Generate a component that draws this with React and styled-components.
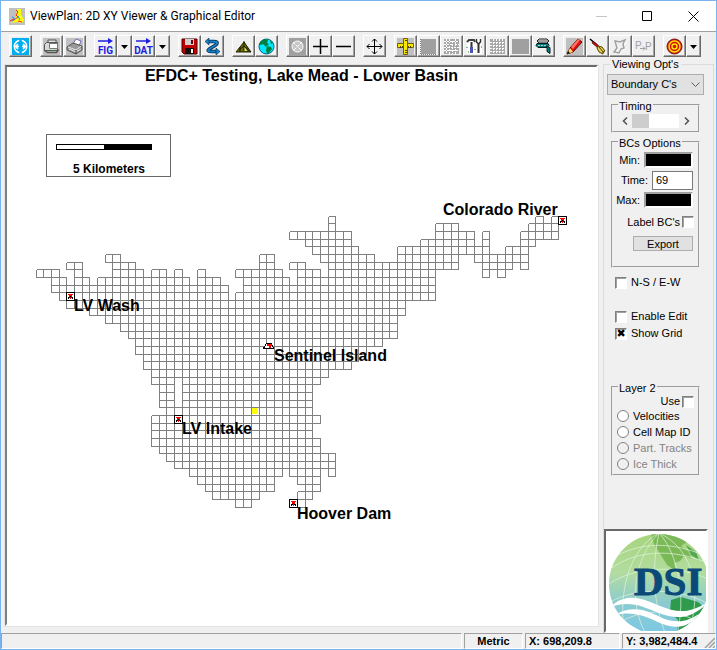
import styled, { createGlobalStyle } from 'styled-components'

const GlobalStyle = createGlobalStyle`
    * {
        box-sizing: border-box;
    }
    body {
        margin: 0;
        background: #f0f0f0;
        color: #000000;
        font-family: "Liberation Sans", Arial, sans-serif;
        font-size: 11px;
        line-height: 13px;
    }
    button, input, select {
        font: inherit;
        color: inherit;
        margin: 0;
        padding: 0;
    }
`

const Window = styled.div`
    display: flex;
    flex-direction: column;
    min-height: 100vh;
    border: 1px solid #7ab4ee;
    background: #f0f0f0;
`

const TitleBar = styled.header`
    display: flex;
    align-items: center;
    height: 31px;
    padding-left: 7px;
    background: #ffffff;
    border-bottom: 1px solid #a0a0a0;

    h1 {
        flex: 1;
        margin: 0 0 0 4px;
        font-family: Roboto, "Noto Sans", sans-serif;
        font-size: 12px;
        font-weight: 400;
        white-space: nowrap;
    }
`

const CaptionButton = styled.button`
    display: flex;
    align-items: center;
    justify-content: center;
    width: 46px;
    height: 28px;
    border: none;
    background: none;
`

const Toolbar = styled.nav`
    display: flex;
    gap: 8px;
    height: 25px;
    padding: 3px 8px 0;
`

const ToolGroup = styled.div`
    display: flex;
`

const ToolButton = styled.button`
    display: flex;
    align-items: center;
    justify-content: center;
    width: ${({ $narrow }) => ($narrow ? '15px' : '23px')};
    height: 22px;
    border: 1px solid;
    border-color: #ffffff #696969 #696969 #ffffff;
    box-shadow: inset -1px -1px 0 #a0a0a0;
    background: #f0f0f0;

    svg {
        display: block;
        flex: none;
    }
`

const Body = styled.main`
    display: flex;
    flex: 1;
    padding: 0 2px 0 4px;
`

const MapPanel = styled.section`
    flex: 1;
    min-width: 0;
    margin: 8px 5px 7px 0;
    border: 2px solid;
    border-color: #696969 #ffffff #ffffff #808080;
    outline: 1px solid #e3e3e3;
    background: #ffffff;

    svg {
        display: block;
    }
    text {
        font-weight: 700;
        font-size: 16px;
    }
    .scaleText {
        font-size: 12px;
    }
`

const Sidebar = styled.fieldset`
    display: flex;
    flex: none;
    flex-direction: column;
    width: 111px;
    min-width: 0;
    margin: 0;
    padding: 0 4px 0 3px;
    border: 1px solid #dcdcdc;
    border-bottom: none;

    > legend {
        margin-left: 3px;
        padding: 0 2px;
        line-height: 15px;
    }
`

const Group = styled.fieldset`
    width: 89px;
    min-width: 0;
    margin: ${({ $top }) => $top}px 0 0 4px;
    padding: 0 4px 2px;
    border: 2px groove #f0f0f0;

    legend {
        margin-left: 1px;
        padding: 3px 1px 0;
        line-height: 13px;
    }
`

const Picker = styled.select`
    width: 97px;
    height: 21px;
    margin-top: 2px;
    padding-left: 3px;
    appearance: none;
    border: 1px solid #adadad;
    border-radius: 0;
    background: #e1e1e1;
`

const PickerBox = styled.label`
    position: relative;
    display: block;
    width: 97px;

    svg {
        position: absolute;
        right: 4px;
        top: 9px;
        pointer-events: none;
    }
`

const ScrollBar = styled.div`
    display: flex;
    align-items: center;
    height: 16px;

    button {
        display: flex;
        flex: none;
        align-items: center;
        justify-content: center;
        width: 15px;
        height: 15px;
        border: none;
        background: none;
    }
    input {
        flex: 1;
        width: 0;
        min-width: 0;
        height: 14px;
        appearance: none;
        background: #ffffff;
    }
    input::-webkit-slider-thumb {
        appearance: none;
        width: 17px;
        height: 14px;
        background: #cdcdcd;
    }
`

const Field = styled.label`
    display: flex;
    align-items: center;
    justify-content: flex-end;
    gap: 4px;
    height: 20px;
    padding-right: 1px;
`

const TextBox = styled.input`
    width: 41px;
    height: 19px;
    padding: 0 3px;
    border: 1px solid #7a7a7a;
    background: #ffffff;
`

const BlackBox = styled.input`
    width: 49px;
    height: 16px;
    border: 2px solid;
    border-color: #a0a0a0 #ffffff #ffffff #a0a0a0;
    background: #000000;
    color: #ffffff;
`

const ExportButton = styled.button`
    display: block;
    width: 60px;
    height: 15px;
    margin: 2px 1px 13px auto;
    border: 1px solid #adadad;
    background: #e1e1e1;
    line-height: 12px;
`

const Option = styled.label`
    display: flex;
    align-items: center;
    justify-content: ${({ $right }) => ($right ? 'flex-end' : 'flex-start')};
    gap: ${({ $right }) => ($right ? '2px' : '4px')};
    height: ${({ $height }) => $height || 17}px;
    color: ${({ $dim }) => ($dim ? '#838383' : '#000000')};
    white-space: nowrap;
`

const CheckBox = styled.input.attrs({ type: 'checkbox' })`
    flex: none;
    display: grid;
    place-content: center;
    width: 12px;
    height: 12px;
    appearance: none;
    border: 1px solid;
    border-color: #808080 #ffffff #ffffff #808080;
    box-shadow: inset 1px 1px 0 #a0a0a0;
    background: #ffffff;

    &:checked::before {
        content: "✖";
        font-family: "DejaVu Sans", sans-serif;
        font-size: 11px;
        line-height: 10px;
    }
`

const Radio = styled.input.attrs({ type: 'radio' })`
    flex: none;
    width: 12px;
    height: 12px;
    appearance: none;
    border: 1px solid #808080;
    border-radius: 50%;
    background: ${({ disabled }) => (disabled ? '#f0f0f0' : '#ffffff')};
`

const CheckList = styled.div`
    display: flex;
    flex-direction: column;
    margin: 6px 0 0 8px;

    label:first-child {
        margin-bottom: 17px;
    }
`

const LogoBox = styled.div`
    width: 104px;
    height: 104px;
    margin-top: auto;
    margin-left: -3px;
    border: 2px solid;
    border-color: #696969 #ffffff #ffffff #696969;
    background: #ffffff;

    svg {
        display: block;
    }
`

const StatusBar = styled.footer`
    display: flex;
    gap: 2px;
    height: 16px;
    font-weight: 700;
`

const StatusCell = styled.div`
    position: relative;
    flex: ${({ $width }) => ($width ? `0 0 ${$width}px` : '1')};
    padding: 1px 3px;
    border: 1px solid;
    border-color: #a0a0a0 #ffffff #ffffff #a0a0a0;
    text-align: ${({ $center }) => ($center ? 'center' : 'left')};
    white-space: nowrap;

    svg {
        position: absolute;
        right: 0;
        bottom: 0;
    }
`

// Wet cells of the model grid: for each row, [first column, column after the last]
const ROWS = [
    [[38, 39], [65, 66], [67, 68]],
    [[38, 39], [52, 55], [64, 68]],
    [[33, 41], [52, 57], [58, 59], [63, 68]],
    [[35, 41], [50, 57], [58, 59], [63, 65]],
    [[36, 42], [47, 59], [61, 64]],
    [[9, 11], [29, 31], [37, 44], [47, 55], [57, 64]],
    [[4, 6], [10, 13], [29, 31], [33, 35], [38, 55], [58, 62], [63, 64]],
    [[0, 3], [5, 6], [10, 14], [15, 17], [18, 19], [21, 22], [26, 32], [34, 37], [38, 52], [58, 59], [60, 61]],
    [[2, 4], [5, 7], [8, 20], [21, 24], [27, 33], [34, 52]],
    [[2, 25], [27, 52]],
    [[3, 25], [26, 52]],
    [[4, 48]],
    [[7, 48]],
    [[9, 47]],
    [[11, 47]],
    [[12, 47]],
    [[13, 45]],
    [[13, 43]],
    [[14, 42]],
    [[14, 41]],
    [[15, 38]],
    [[15, 18], [19, 37]],
    [[16, 18], [19, 36]],
    [[16, 18], [19, 36]],
    [[16, 18], [19, 36]],
    [[17, 36]],
    [[15, 37]],
    [[15, 36]],
    [[15, 36]],
    [[15, 37]],
    [[16, 37]],
    [[17, 39]],
    [[18, 39]],
    [[20, 32], [33, 37], [38, 39]],
    [[21, 31], [34, 37]],
    [[22, 31], [35, 37]],
    [[23, 29], [34, 36]],
    [[26, 28], [34, 35]],
]

const colX = (i) => Math.floor(29 + i * 7.69) + 0.5
const rowY = (j) => Math.floor(149.2 + j * 7.66) + 0.5

const gridPath = ROWS.map((spans, j) =>
    spans.map(([from, to]) => {
        let d = `M${colX(from)} ${rowY(j)}H${colX(to)}M${colX(from)} ${rowY(j + 1)}H${colX(to)}`
        for (let i = from; i <= to; i++) {
            d += `M${colX(i)} ${rowY(j)}V${rowY(j + 1)}`
        }
        return d
    }).join('')
).join('')

const STATIONS = [
    { name: 'Colorado River', col: 68, row: 0, x: 436, y: 148 },
    { name: 'LV Wash', col: 4, row: 10, x: 67, y: 244 },
    { name: 'LV Intake', col: 18, row: 26, x: 175, y: 367 },
    { name: 'Hoover Dam', col: 33, row: 37, x: 290, y: 452 },
]

const Station = ({ name, col, row, x, y }) => (
    <g>
        <g transform={`translate(${colX(col)} ${rowY(row)})`} shapeRendering="crispEdges">
            <rect width="8" height="8" fill="#ffffff" stroke="#000000" />
            <path d="M1.500 6.500l2-3M6.500 6.500l-2-3" stroke="#000000" />
            <path d="M1.500 1.500h5v1h-1v2h-1v2h-1v-2h-1v-2h-1z" fill="#ff0000" />
            <path d="M3.500 3.500h1v1h-1z" fill="#000000" />
        </g>
        <text x={x} y={y}>{name}</text>
    </g>
)

const LakeMap = () => (
    <svg width="100%" height="557" role="img" aria-label="Lake Mead grid">
        <g shapeRendering="crispEdges">
            <rect x="39.5" y="67.5" width="124" height="42" fill="none" stroke="#696969" />
            <rect x="49.5" y="77.5" width="95" height="5" fill="#ffffff" stroke="#000000" />
            <rect x="97" y="77" width="48" height="6" fill="#000000" />
            <path d={gridPath} fill="none" stroke="#808080" />
            <rect x={colX(28) + 0.5} y={rowY(25) + 0.5} width="6" height="6" fill="#ffff00" />
            <path d="M256.500 281.500l3-5h5l2 5z" fill="#ffffff" stroke="#000000" />
            <path d="M260 277h5v2h-1v2h-2v-2h-2z" fill="#ff0000" />
        </g>
        <text x="50%" y="14" textAnchor="middle">EFDC+ Testing, Lake Mead - Lower Basin</text>
        <text className="scaleText" x="102" y="106" textAnchor="middle">5 Kilometers</text>
        {STATIONS.map((s) => <Station key={s.name} {...s} />)}
        <text x="267" y="294">Sentinel Island</text>
    </svg>
)

const Icon = ({ children, w = 17 }) => (
    <svg width={w} height="17" viewBox={`0 0 ${w} 17`} fill="none" aria-hidden="true">{children}</svg>
)

const Arrow = () => <Icon w={9}><path d="M1 7h7L4.500 11z" fill="#000000" /></Icon>

const FileText = ({ children }) => (
    <Icon w={19}>
        <path d="M2 3h13" stroke="#2020e0" strokeWidth="1.500" />
        <path d="M12 0l5 3-5 3z" fill="#2020e0" />
        <text x="9.500" y="16" textAnchor="middle" fill="#2020e0" fontFamily="Roboto, sans-serif" fontSize="10" fontWeight="700">{children}</text>
    </Icon>
)

const ICONS = {
    extents: (
        <Icon>
            <path d="M0 0h17v17H0z" fill="#00aeef" />
            <circle cx="8.500" cy="8.500" r="6.200" stroke="#ffffff" strokeWidth="1.500" />
            <path d="M8.500 0v17" stroke="#00aeef" strokeWidth="2.500" />
            <path d="M3 8.500h4M10 8.500h4M6 6l-2.500 2.500L6 11M11 6l2.500 2.500L11 11" stroke="#ffffff" strokeWidth="1.500" />
        </Icon>
    ),
    copy: (
        <Icon>
            <path d="M0 0h17v17H0z" fill="#c0c0c0" />
            <path d="M5 5V2h8v4" fill="#e8e8e8" stroke="#555555" />
            <path d="M1.500 6.500l2-2h11v8h-13z" fill="#d8d8d8" stroke="#555555" />
            <path d="M6.500 5.500h8v5h-8z" fill="#ffffff" stroke="#777777" />
            <path d="M1.500 12.500l3 2h9l2-3" stroke="#555555" strokeWidth="1.500" />
            <path d="M9 12.500h2" stroke="#00a000" />
        </Icon>
    ),
    print: (
        <Icon>
            <path d="M0 0h17v17H0z" fill="#c0c0c0" />
            <path d="M7 6l3-5 5 2-2 5z" fill="#ffffff" stroke="#6b70bb" />
            <path d="M1 9l6-4 9 3v4l-6 4-9-4z" fill="#999999" stroke="#555555" />
            <path d="M2 9l8 3 5-4M3 11l7 3 5-3" stroke="#e8e8e8" />
            <path d="M10 12v4" stroke="#444444" />
        </Icon>
    ),
    fig: <FileText>FIG</FileText>,
    dat: <FileText>DAT</FileText>,
    arrow: <Arrow />,
    save: (
        <Icon>
            <path d="M1 1h15v15H3l-2-2z" fill="#c00000" stroke="#500000" />
            <path d="M4 1h9v6H4z" fill="#d0d0d0" />
            <path d="M10 2h2v4h-2z" fill="#700000" />
            <path d="M4 10h9v6H4z" fill="#101010" />
            <path d="M10 11h2v4h-2z" fill="#ffffff" />
        </Icon>
    ),
    reload: (
        <Icon>
            <path d="M3 3.500h7c4 0 4 2 1 4l-5 3c-3 2-2 3 1 3h6" stroke="#002848" strokeWidth="3.500" />
            <path d="M3 3.500h7c4 0 4 2 1 4l-5 3c-3 2-2 3 1 3h6" stroke="#1680c8" strokeWidth="2" />
            <path d="M5 0L1 3.500 5 7zM12 10l4 3.500-4 3.500z" fill="#1680c8" stroke="#002848" strokeWidth=".6" />
        </Icon>
    ),
    contour: (
        <Icon>
            <path d="M1 14L9 4l7 10z" fill="#6c6c00" stroke="#202000" />
            <path d="M9 3v11M5 9v5M12 9v5M4 12l5-4 6 6" stroke="#202000" />
            <path d="M9.500 13v-4l3 4z" fill="#dede80" />
        </Icon>
    ),
    world: (
        <Icon>
            <circle cx="8.500" cy="8.500" r="7.500" fill="#00e8ff" stroke="#006080" />
            <path d="M3 3l4-2 3 1-1 3 2 1-3 3-3-3-2 1-2-1zM9 8l4 1 1 2-3 4-2 1-1-4zM12 2l3 3-2 1z" fill="#008040" />
        </Icon>
    ),
    zoomAll: (
        <Icon>
            <path d="M0 0h17v17H0z" fill="#a0a0a0" />
            <circle cx="8.500" cy="8.500" r="5.500" fill="#c8c8c8" stroke="#ffffff" />
            <path d="M4 4l9 9M13 4l-9 9" stroke="#ffffff" strokeDasharray="3 1" />
        </Icon>
    ),
    plus: <Icon><path d="M8.500 1v15M1 8.500h15" stroke="#000000" strokeWidth="1.500" /></Icon>,
    minus: <Icon><path d="M1 8.500h15" stroke="#000000" strokeWidth="1.500" /></Icon>,
    move: (
        <Icon>
            <path d="M8.500 1v15M1 8.500h15M6 3.500L8.500 1 11 3.500M6 13.500L8.500 16l2.500-2.500M3.500 6L1 8.500 3.500 11M13.500 6L16 8.500 13.500 11" stroke="#000000" />
        </Icon>
    ),
    ruler: (
        <Icon>
            <path d="M0 0h17v17H0z" fill="#c0c0c0" />
            <path d="M6.500 .5h4v16h-4zM.5 5.500h16v4H.5z" fill="#f8e800" stroke="#706000" />
            <path d="M7 5h3v5H7z" fill="#f8e800" />
            <path d="M3.500 8v2M5.500 8v2M11.500 8v2M13.500 8v2M8 12.500h2M8 14.500h2M8 2.500h2" stroke="#504000" />
        </Icon>
    ),
    block: (
        <Icon>
            <path d="M1 1h15v15H1z" fill="#a0a0a0" />
            <path d="M.5 1v16M1 16.500h16" stroke="#808080" strokeDasharray="1 1" />
        </Icon>
    ),
    cells: (
        <Icon>
            <path d="M1 1h15v15H1z" fill="#a8a8a8" />
            <path d="M1 3.500h15M1 6.500h8M12 6.500h4M1 9.500h5M8 9.500h8M1 12.500h15M3.500 1v15M6.500 1v4M6.500 8v8M9.500 3v13M12.500 1v7M12.500 11v5" stroke="#ffffff" strokeDasharray="2 1" />
        </Icon>
    ),
    tools: (
        <Icon>
            <path d="M1 1h15v15H1z" fill="#ffffff" />
            <path d="M1 4l2-2h5l1 2" stroke="#404040" strokeWidth="2" />
            <path d="M5.500 4v5M12.500 6v9" stroke="#303030" strokeWidth="2" />
            <path d="M5.500 9v6" stroke="#5050b8" strokeWidth="3" />
            <path d="M10.500 1v3l2 2 2-2V1" stroke="#303030" strokeWidth="1.500" />
            <path d="M1 9v1M2 14h1M9 11v1M15 9h1" stroke="#008000" />
        </Icon>
    ),
    table: (
        <Icon>
            <path d="M1 1h15v15H1z" fill="#a8a8a8" />
            <path d="M1 4.500h15M1 7.500h15M1 10.500h15M1 13.500h15M4.500 1v15M7.500 1v15M10.500 1v15M13.500 1v15" stroke="#ffffff" strokeDasharray="2 1" />
        </Icon>
    ),
    solid: <Icon><path d="M0 1h17v15H0z" fill="#a0a0a0" /></Icon>,
    layers: (
        <Icon>
            <path d="M2 3l2-2h8l2 2-2 2H4z" fill="#dddddd" stroke="#202020" />
            <path d="M3 3h10" stroke="#606060" />
            <path d="M2 5.500h11l1 2-2 2H3l-2-2z" fill="#008080" stroke="#002020" />
            <path d="M3 7.500h9" stroke="#b8c8c8" strokeDasharray="2 1" />
            <path d="M11 8.500l4 1v6l-3-2v-3z" fill="#008080" stroke="#002020" />
        </Icon>
    ),
    pencil: (
        <Icon>
            <path d="M0 0h17v17H0z" fill="#c0c0c0" />
            <path d="M1 16l3-6 8-9 4 3-9 10z" fill="#e01010" stroke="#600000" />
            <path d="M5 9l7-8 2 1-7 9z" fill="#ff7060" />
            <path d="M1 16l3-6 3 4z" fill="#f8e070" />
            <path d="M1 16l1-3 2 2z" fill="#000000" />
        </Icon>
    ),
    dart: (
        <Icon>
            <path d="M1 1l7 6" stroke="#000000" strokeWidth="1.500" />
            <path d="M4 3l6 5-1 2-6-5z" fill="#c01010" stroke="#400000" strokeWidth=".6" />
            <path d="M9 8l4 1 3 4-2 1v2l-4-2-2-4z" fill="#e8d050" stroke="#504000" />
            <path d="M10 9l5 6" stroke="#504000" />
        </Icon>
    ),
    polygon: (
        <Icon>
            <path d="M4 4l5 1 5-2-2 4 1 4-3 1-2 4-5-1 3-4z" stroke="#ffffff" />
            <path d="M3 3l5 1 5-2-2 4 1 4-3 1-2 4-5-1 3-4z" stroke="#a0a0a0" strokeWidth="1.500" />
        </Icon>
    ),
    pointToPoint: (
        <Icon>
            <text x="0" y="11" fill="#a0a0a0" fontFamily="Liberation Sans, sans-serif" fontSize="10">P</text>
            <text x="10" y="12" fill="#a0a0a0" fontFamily="Liberation Sans, sans-serif" fontSize="10">P</text>
            <path d="M5 10.500h5M8 8.500l2 2-2 2" stroke="#a0a0a0" />
        </Icon>
    ),
    target: (
        <Icon>
            <circle cx="8.500" cy="8.500" r="7.500" fill="#d01010" stroke="#801010" />
            <circle cx="8.500" cy="8.500" r="5.500" stroke="#ffe000" strokeWidth="1.500" />
            <circle cx="8.500" cy="8.500" r="2.500" fill="#d01010" stroke="#ffe000" strokeWidth="1.500" />
        </Icon>
    ),
}

const TOOLS = [
    ['extents'],
    ['copy', 'print'],
    ['fig', 'arrow', 'dat', 'arrow'],
    ['save', 'reload'],
    ['contour', 'world'],
    ['zoomAll', 'plus', 'minus'],
    ['move'],
    ['ruler', 'block', 'cells', 'tools', 'table', 'solid', 'layers'],
    ['pencil', 'dart', 'polygon', 'pointToPoint'],
    ['target', 'arrow'],
]

const AppIcon = () => (
    <svg width="18" height="17" viewBox="0 0 18 17" aria-hidden="true">
        <path d="M1 0h16v17H1z" fill="#c0c0c0" />
        <path d="M9 1h4v5l3 6-2 3-5-1-6 1 5-6z" fill="#ffff00" />
        <path d="M8 2l2 2-2 3 2 2-4 3" fill="none" stroke="#ff2020" />
        <path d="M4 9c3 0 3 4 0 4M10 8l2 4" fill="none" stroke="#2080ff" />
        <path d="M2 13l4-2M10 13l4 1" fill="none" stroke="#ff2020" />
    </svg>
)

const DsiLogo = () => (
    <svg width="100" height="100" viewBox="0 0 100 100" role="img" aria-label="DSI">
        <defs>
            <linearGradient id="sphere" x1="0" y1="0" x2="0" y2="1">
                <stop offset="0" stopColor="#a5d478" />
                <stop offset=".4" stopColor="#b2dca0" />
                <stop offset=".7" stopColor="#8acbd0" />
                <stop offset="1" stopColor="#7cc8e4" />
            </linearGradient>
            <clipPath id="disc"><circle cx="53" cy="53" r="50" /></clipPath>
        </defs>
        <g clipPath="url(#disc)">
            <rect width="100" height="104" fill="url(#sphere)" />
            <path d="M45 3c10-2 26 0 36 8l-6 4 7 5 4 8-8-3-4 5-6 2 2 8-9-6-8-13-5-8z" fill="#7bb957" />
            <path d="M80 14l10 7 3 8-8-5z" fill="#55a851" />
            <path d="M65 69l10-3 17 5 6 5-6 10-9 6-6 12h-6l1-15-8-8z" fill="#2d9b4b" />
            <g fill="none" stroke="#e4f3df" strokeWidth=".7">
                <path d="M3 39c26-20 62-22 99-7M1 54c28-19 70-21 103-5M12 24c24-12 50-13 80-2M4 71c27-15 68-14 97 1M16 90c22-12 52-12 75 0" />
                <path d="M53 2c-24 24-32 68-13 101M53 2C33 12 14 42 17 90M53 2c-7 32-7 68 7 102M53 2c20 22 27 65 18 101M53 2c30 14 43 49 32 92" />
            </g>
            <path d="M4 76c17-16 34-8 50-1 17 7 30 8 49-5-16 18-32 19-50 12-17-7-29-13-49-6z" fill="#ffffff" />
            <path d="M9 84c17-10 31-5 45 2 15 7 28 6 43-6-13 17-27 19-43 12-16-8-29-12-45-8z" fill="#ffffff" />
        </g>
        <text x="28" y="64" fill="#0b4a78" stroke="#0b4a78" fontFamily="Liberation Serif, serif" fontSize="41" fontWeight="700">DSI</text>
    </svg>
)

const App = () => {
    return <>
        <GlobalStyle />
        <Window>
            <TitleBar>
                <AppIcon />
                <h1>ViewPlan: 2D XY Viewer &amp; Graphical Editor</h1>
                <CaptionButton aria-label="Minimize">
                    <svg width="11" height="11"><path d="M0 5.500h11" stroke="#c4c4c4" /></svg>
                </CaptionButton>
                <CaptionButton aria-label="Maximize">
                    <svg width="11" height="11"><path d="M.5 .5h9v9h-9z" fill="none" stroke="#000000" /></svg>
                </CaptionButton>
                <CaptionButton aria-label="Close">
                    <svg width="11" height="11"><path d="M.5 .5l10 10M10.500 .5l-10 10" stroke="#000000" /></svg>
                </CaptionButton>
            </TitleBar>
            <Toolbar>
                {TOOLS.map((group) => (
                    <ToolGroup key={group[0]}>
                        {group.map((name, i) => (
                            <ToolButton key={name + i} aria-label={name} $narrow={name === 'arrow'}>{ICONS[name]}</ToolButton>
                        ))}
                    </ToolGroup>
                ))}
            </Toolbar>
            <Body>
                <MapPanel><LakeMap /></MapPanel>
                <Sidebar>
                    <legend>Viewing Opt's</legend>
                    <PickerBox>
                        <Picker aria-label="Viewing option" defaultValue="Boundary C's">
                            <option>Boundary C's</option>
                        </Picker>
                        <svg width="9" height="7"><path d="M.5 1.500l4 4 4-4" fill="none" stroke="#606060" /></svg>
                    </PickerBox>
                    <Group $top={2}>
                        <legend>Timing</legend>
                        <ScrollBar>
                            <button aria-label="Earlier">
                                <svg width="6" height="8"><path d="M5 .5L1.500 4 5 7.500" fill="none" stroke="#505050" strokeWidth="1.500" /></svg>
                            </button>
                            <input type="range" aria-label="Timing" min="0" max="100" defaultValue="0" />
                            <button aria-label="Later">
                                <svg width="6" height="8"><path d="M1 .5L4.500 4 1 7.500" fill="none" stroke="#505050" strokeWidth="1.500" /></svg>
                            </button>
                        </ScrollBar>
                    </Group>
                    <Group $top={1}>
                        <legend>BCs Options</legend>
                        <Field>Min: <BlackBox /></Field>
                        <Field>Time: <TextBox defaultValue="69" /></Field>
                        <Field>Max: <BlackBox /></Field>
                        <Option $right $height={24}>Label BC's <CheckBox /></Option>
                        <ExportButton>Export</ExportButton>
                    </Group>
                    <CheckList>
                        <Option><CheckBox />N-S / E-W</Option>
                        <Option><CheckBox />Enable Edit</Option>
                        <Option><CheckBox defaultChecked />Show Grid</Option>
                    </CheckList>
                    <Group $top={37}>
                        <legend>Layer 2</legend>
                        <Option $right $height={13}>Use <CheckBox /></Option>
                        <Option $height={16}><Radio name="layer" />Velocities</Option>
                        <Option $height={16}><Radio name="layer" />Cell Map ID</Option>
                        <Option $height={16} $dim><Radio name="layer" disabled />Part. Tracks</Option>
                        <Option $height={16} $dim><Radio name="layer" disabled />Ice Thick</Option>
                    </Group>
                    <LogoBox><DsiLogo /></LogoBox>
                </Sidebar>
            </Body>
            <StatusBar>
                <StatusCell />
                <StatusCell $width={59} $center>Metric</StatusCell>
                <StatusCell $width={95}>X: 698,209.8</StatusCell>
                <StatusCell $width={94}>
                    Y: 3,982,484.4
                    <svg width="11" height="11"><path d="M1 11L11 1M5 11l6-6M9 11l2-2" stroke="#a0a0a0" strokeWidth="1.500" /></svg>
                </StatusCell>
            </StatusBar>
        </Window>
    </>
}

export default App
